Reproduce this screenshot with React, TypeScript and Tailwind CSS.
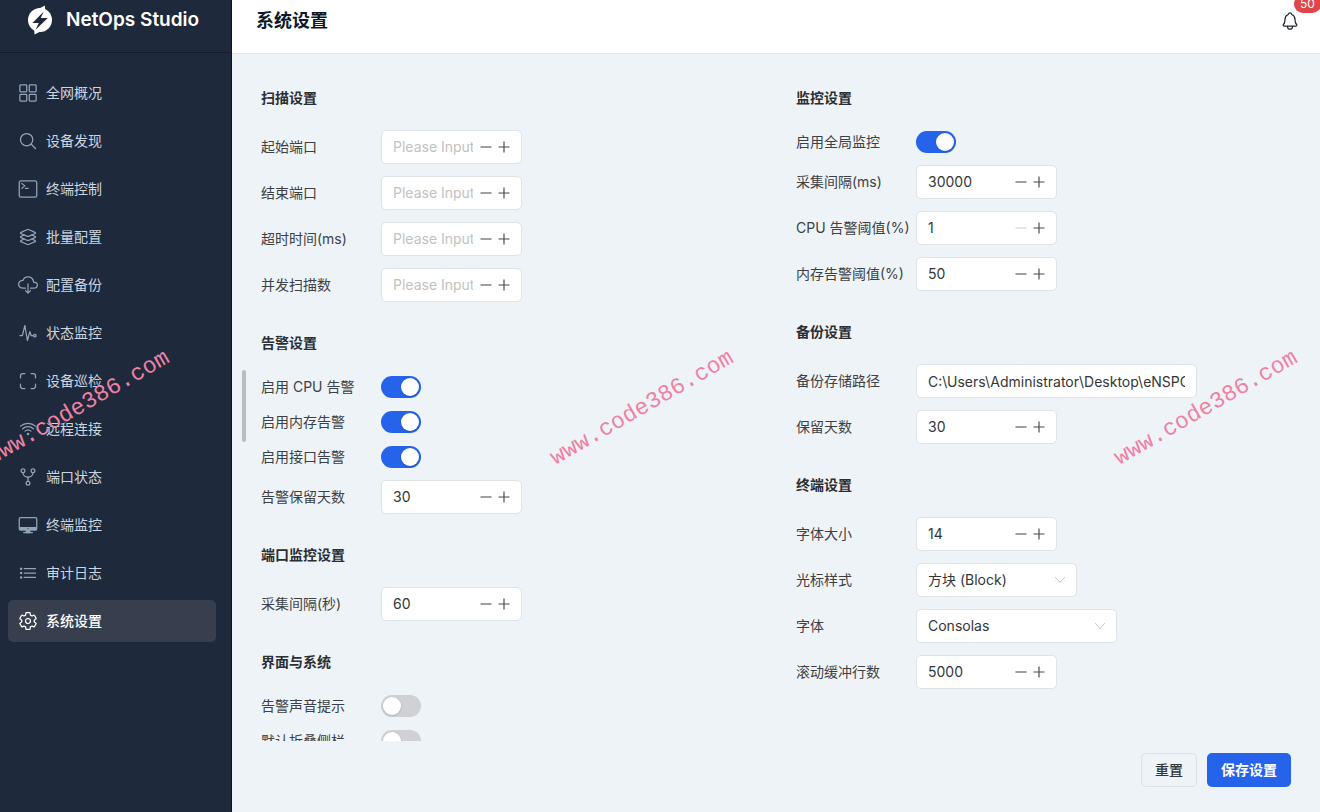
import { useState, type ReactNode } from "react";
import type { IconType } from "react-icons";
import {
  IoCloudDownloadOutline,
  IoDesktopOutline,
  IoGitNetworkOutline,
  IoGridOutline,
  IoLayersOutline,
  IoListOutline,
  IoNotificationsOutline,
  IoPulseOutline,
  IoScanOutline,
  IoSearchOutline,
  IoSettingsOutline,
  IoTerminalOutline,
  IoWifiOutline,
} from "react-icons/io5";
import clsx from "clsx";

const NAV_ITEMS: { label: string; icon: IconType; active?: boolean }[] = [
  { label: "全网概况", icon: IoGridOutline },
  { label: "设备发现", icon: IoSearchOutline },
  { label: "终端控制", icon: IoTerminalOutline },
  { label: "批量配置", icon: IoLayersOutline },
  { label: "配置备份", icon: IoCloudDownloadOutline },
  { label: "状态监控", icon: IoPulseOutline },
  { label: "设备巡检", icon: IoScanOutline },
  { label: "远程连接", icon: IoWifiOutline },
  { label: "端口状态", icon: IoGitNetworkOutline },
  { label: "终端监控", icon: IoDesktopOutline },
  { label: "审计日志", icon: IoListOutline },
  { label: "系统设置", icon: IoSettingsOutline, active: true },
];

function Logo() {
  return (
    <svg viewBox="0 0 28 30" className="h-[30px] w-7" aria-hidden="true">
      <circle cx="14" cy="15" r="12" fill="#fff" />
      <path d="M18.8 0.6L19.4 6L11.5 4.5ZM8.5 29.4L8.2 24L16.5 25.5Z" fill="#fff" />
      <path d="M17.6 6.8L6.4 18H12.8L9.6 24.8L21.8 13H14.8Z" fill="#1e293b" />
    </svg>
  );
}

function Sidebar() {
  return (
    <aside className="flex w-[232px] shrink-0 flex-col border-r border-[#0b1424] bg-[#1e293b]">
      <div className="flex h-[53px] items-center gap-3 border-b border-[#121c2c] pb-3 pl-[26px]">
        <Logo />
        <span className="text-[19px] leading-6 font-semibold text-white">NetOps Studio</span>
      </div>
      <nav className="flex flex-col gap-1.5 py-[19px] pr-[15px] pl-2">
        {NAV_ITEMS.map(({ label, icon: Icon, active }) => (
          <a
            key={label}
            href="#"
            aria-current={active ? "page" : undefined}
            className={clsx(
              "flex h-[42px] items-center gap-2 rounded-[5px] pl-2.5 text-sm",
              active ? "bg-[#373f4e] font-medium text-white" : "text-[#cbd5e1]"
            )}
          >
            <Icon className={clsx("size-5", active ? "text-white" : "text-[#94a3b8]")} />
            {label}
          </a>
        ))}
      </nav>
    </aside>
  );
}

function Section({ title, children }: { title: string; children: ReactNode }) {
  return (
    <section>
      <h2 className="mb-[22px] text-sm leading-5 font-semibold text-[#2b2e32]">{title}</h2>
      <div className="flex flex-col gap-3">{children}</div>
    </section>
  );
}

function Field({ id, label, children }: { id: string; label: string; children: ReactNode }) {
  return (
    <div className="flex items-center">
      <label htmlFor={id} className="w-[120px] shrink-0 text-sm leading-5 whitespace-nowrap text-[#3d4145]">
        {label}
      </label>
      {children}
    </div>
  );
}

function SwitchField({ id, label, on = false }: { id: string; label: string; on?: boolean }) {
  return (
    <Field id={id} label={label}>
      <div className="flex h-[23px] items-center">
        <input
          id={id}
          type="checkbox"
          role="switch"
          defaultChecked={on}
          className="flex h-[22px] w-10 appearance-none items-center rounded-full bg-[#cfd1d4] px-0.5 before:size-[18px] before:rounded-full before:bg-white before:shadow-sm before:content-[''] checked:justify-end checked:bg-[#2563eb]"
        />
      </div>
    </Field>
  );
}

interface NumberFieldProps {
  id: string;
  label: string;
  initial?: number;
  min?: number;
}

function NumberField({ id, label, initial, min }: NumberFieldProps) {
  const [value, setValue] = useState(initial === undefined ? "" : String(initial));
  const atMin = min !== undefined && value !== "" && Number(value) <= min;
  const step = (by: number) => setValue(String(Number(value) + by));

  return (
    <Field id={id} label={label}>
      <div className="flex h-[34px] w-[141px] items-center rounded-[5px] border border-[#dfe3e8] bg-white pr-2 pl-[11px]">
        <input
          id={id}
          type="text"
          inputMode="numeric"
          placeholder="Please Input"
          value={value}
          onChange={(e) => setValue(e.target.value)}
          className="mr-1 min-w-0 flex-1 bg-transparent text-sm text-[#333639] outline-none placeholder:text-[#c2c2c2]"
        />
        <button
          type="button"
          aria-label={`${label} 减少`}
          disabled={atMin}
          onClick={() => step(-1)}
          className="flex size-[18px] items-center justify-center text-[#5c5f63] disabled:text-[#d4d6d8]"
        >
          <svg viewBox="0 0 12 12" className="size-3" stroke="currentColor" strokeWidth="1.2">
            <path d="M0.5 6H11.5" />
          </svg>
        </button>
        <button
          type="button"
          aria-label={`${label} 增加`}
          onClick={() => step(1)}
          className="flex size-[18px] items-center justify-center text-[#4a4d51]"
        >
          <svg viewBox="0 0 12 12" className="size-3" stroke="currentColor" strokeWidth="1.2">
            <path d="M0.5 6H11.5M6 0.5V11.5" />
          </svg>
        </button>
      </div>
    </Field>
  );
}

function SelectField({
  id,
  label,
  options,
  wide = false,
}: {
  id: string;
  label: string;
  options: string[];
  wide?: boolean;
}) {
  return (
    <Field id={id} label={label}>
      <div className={clsx("relative h-[34px]", wide ? "w-[201px]" : "w-[161px]")}>
        <select
          id={id}
          className="size-full appearance-none rounded-[5px] border border-[#dfe3e8] bg-white pl-[11px] text-sm text-[#333639]"
        >
          {options.map((o) => (
            <option key={o}>{o}</option>
          ))}
        </select>
        <svg
          viewBox="0 0 12 12"
          className="pointer-events-none absolute top-[11px] right-[11px] size-3"
          fill="none"
          stroke="#c2c5c9"
          strokeLinecap="round"
          strokeLinejoin="round"
        >
          <path d="M1.5 3.5L6 8.5L10.5 3.5" />
        </svg>
      </div>
    </Field>
  );
}

function SettingsForm() {
  return (
    <div className="grid grid-cols-2 gap-x-10">
      <div className="flex flex-col gap-[31px]">
        <Section title="扫描设置">
          <NumberField id="scan-start" label="起始端口" />
          <NumberField id="scan-end" label="结束端口" />
          <NumberField id="scan-timeout" label="超时时间(ms)" />
          <NumberField id="scan-concurrency" label="并发扫描数" />
        </Section>
        <Section title="告警设置">
          <SwitchField id="alarm-cpu" label="启用 CPU 告警" on />
          <SwitchField id="alarm-memory" label="启用内存告警" on />
          <SwitchField id="alarm-port" label="启用接口告警" on />
          <NumberField id="alarm-days" label="告警保留天数" initial={30} />
        </Section>
        <Section title="端口监控设置">
          <NumberField id="port-interval" label="采集间隔(秒)" initial={60} />
        </Section>
        <Section title="界面与系统">
          <SwitchField id="ui-sound" label="告警声音提示" />
          <SwitchField id="ui-collapse" label="默认折叠侧栏" />
        </Section>
      </div>

      <div className="flex flex-col gap-[31px]">
        <Section title="监控设置">
          <SwitchField id="monitor-global" label="启用全局监控" on />
          <NumberField id="monitor-interval" label="采集间隔(ms)" initial={30000} />
          <NumberField id="monitor-cpu" label="CPU 告警阈值(%)" initial={1} min={1} />
          <NumberField id="monitor-memory" label="内存告警阈值(%)" initial={50} min={1} />
        </Section>
        <Section title="备份设置">
          <Field id="backup-path" label="备份存储路径">
            <input
              id="backup-path"
              type="text"
              defaultValue="C:\Users\Administrator\Desktop\eNSPOps\backup"
              className="h-[34px] w-[281px] rounded-[5px] border border-[#dfe3e8] bg-white px-[11px] text-sm text-[#333639] outline-none"
            />
          </Field>
          <NumberField id="backup-days" label="保留天数" initial={30} />
        </Section>
        <Section title="终端设置">
          <NumberField id="term-size" label="字体大小" initial={14} />
          <SelectField id="term-cursor" label="光标样式" options={["方块 (Block)"]} />
          <SelectField id="term-font" label="字体" options={["Consolas"]} wide />
          <NumberField id="term-buffer" label="滚动缓冲行数" initial={5000} />
        </Section>
      </div>
    </div>
  );
}

function Watermark() {
  return (
    <div aria-hidden="true" className="pointer-events-none absolute inset-0 overflow-hidden">
      {[0, 1, 2].map((i) => (
        <span
          key={i}
          className="absolute top-[408px] -translate-1/2 -rotate-30 font-['Liberation_Mono',monospace] text-[23px] leading-6 text-[#ee82a4]"
          style={{ left: 78 + i * 564 }}
        >
          www.code386.com
        </span>
      ))}
    </div>
  );
}

export default function App() {
  return (
    <div className="relative flex h-screen overflow-hidden bg-[#eef3f8] font-['Inter','Noto_Sans_CJK_SC',sans-serif]">
      <Sidebar />

      <div className="relative flex min-w-0 flex-1 flex-col">
        <header className="flex h-[54px] shrink-0 items-center justify-between border-b border-[#e4e8ee] bg-white pr-5 pb-3 pl-6">
          <h1 className="text-lg leading-6 font-semibold text-[#0f172a]">系统设置</h1>
          <button type="button" aria-label="通知" className="relative text-[#1f2937]">
            <IoNotificationsOutline className="size-5" />
            <span className="absolute -top-4 left-3.5 flex h-[18px] w-[27px] items-center justify-center rounded-full bg-[#e0454a] text-xs text-white">
              50
            </span>
          </button>
        </header>

        <main className="min-h-0 flex-1 overflow-y-auto px-[29px] pt-[34px] [scrollbar-width:none]">
          <SettingsForm />
        </main>

        <footer className="flex shrink-0 justify-end gap-2.5 px-[29px] pt-3 pb-[25px]">
          <button
            type="button"
            className="h-[34px] rounded-[5px] border border-[#dce1e7] px-[13px] text-sm font-medium text-[#333639]"
          >
            重置
          </button>
          <button type="button" className="h-[34px] rounded-[5px] bg-[#2563eb] px-3.5 text-sm font-semibold text-white">
            保存设置
          </button>
        </footer>

        {/* scroll thumb */}
        <div className="absolute top-[370px] left-2.5 h-[72px] w-1 rounded-full bg-[#b9bdc2]" />
      </div>

      <Watermark />
    </div>
  );
}
